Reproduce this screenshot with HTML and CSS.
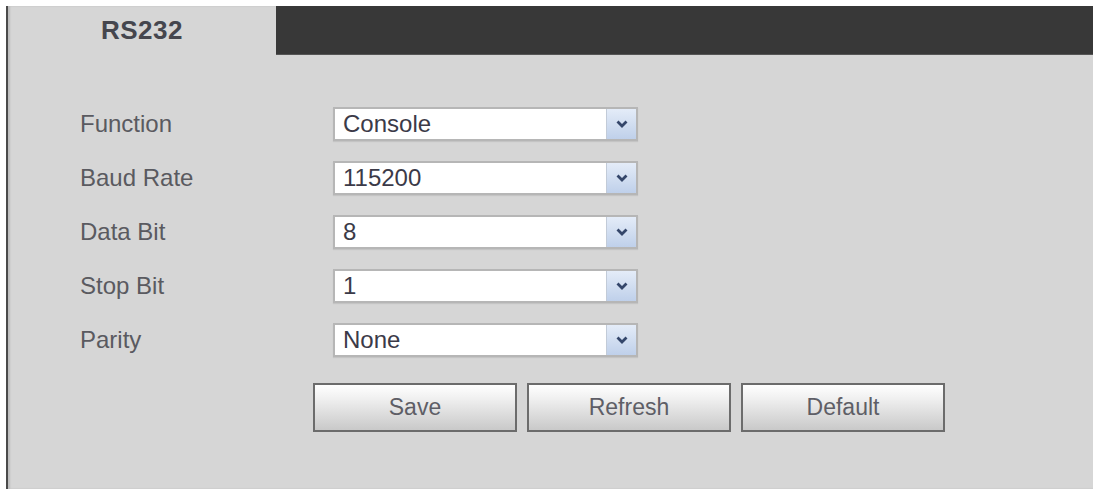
FILE: index.html
```html
<!DOCTYPE html>
<html lang="en">
<head>
  <meta charset="UTF-8">
  <title>RS232</title>
  <link rel="stylesheet" href="styles.css">
</head>
<body>
  <div class="panel">
    <div class="tabs">
      <div class="tab-active">RS232</div>
      <div class="tab-bar"></div>
    </div>
    <div class="form">
      <div class="row">
        <span class="label">Function</span>
        <div class="select">
          <span class="select-value">Console</span>
          <span class="select-arrow"><svg width="14" height="10" viewBox="0 0 14 10"><polyline points="2.5,2.5 7,7 11.5,2.5" fill="none" stroke="#34466a" stroke-width="2.8"/></svg></span>
        </div>
      </div>
      <div class="row">
        <span class="label">Baud Rate</span>
        <div class="select">
          <span class="select-value">115200</span>
          <span class="select-arrow"><svg width="14" height="10" viewBox="0 0 14 10"><polyline points="2.5,2.5 7,7 11.5,2.5" fill="none" stroke="#34466a" stroke-width="2.8"/></svg></span>
        </div>
      </div>
      <div class="row">
        <span class="label">Data Bit</span>
        <div class="select">
          <span class="select-value">8</span>
          <span class="select-arrow"><svg width="14" height="10" viewBox="0 0 14 10"><polyline points="2.5,2.5 7,7 11.5,2.5" fill="none" stroke="#34466a" stroke-width="2.8"/></svg></span>
        </div>
      </div>
      <div class="row">
        <span class="label">Stop Bit</span>
        <div class="select">
          <span class="select-value">1</span>
          <span class="select-arrow"><svg width="14" height="10" viewBox="0 0 14 10"><polyline points="2.5,2.5 7,7 11.5,2.5" fill="none" stroke="#34466a" stroke-width="2.8"/></svg></span>
        </div>
      </div>
      <div class="row">
        <span class="label">Parity</span>
        <div class="select">
          <span class="select-value">None</span>
          <span class="select-arrow"><svg width="14" height="10" viewBox="0 0 14 10"><polyline points="2.5,2.5 7,7 11.5,2.5" fill="none" stroke="#34466a" stroke-width="2.8"/></svg></span>
        </div>
      </div>
      <div class="buttons">
        <button class="btn">Save</button>
        <button class="btn">Refresh</button>
        <button class="btn">Default</button>
      </div>
    </div>
  </div>
</body>
</html>
```

FILE: styles.css
```css
html, body {
  height: 100%;
}
body {
  background: #fff;
  margin: 0;
  padding-top: 6px;
  box-sizing: border-box;
  font-family: "Liberation Sans", Arial, sans-serif;
  overflow: hidden;
}
.panel {
  margin-left: 6px;
  margin-right: 2px;
  height: 100%;
  background: #d6d6d6;
  border-left: 2px solid #4a4a4a;
  box-shadow: inset 2px 0 2px #bdbdbd;
}
.tabs {
  display: flex;
  height: 49px;
}
.tab-active {
  width: 268px;
  display: flex;
  align-items: center;
  justify-content: center;
  font-size: 26px;
  font-weight: bold;
  color: #45464e;
  letter-spacing: 0.5px;
}
.tab-bar {
  flex: 1;
  background: #383838;
  border-bottom: 1px solid #555;
}
.form {
  padding: 52px 0 0 72px;
}
.row {
  display: flex;
  align-items: center;
  height: 34px;
  margin-bottom: 20px;
}
.label {
  width: 253px;
  font-size: 24px;
  color: #5a5a60;
}
.select {
  display: flex;
  width: 305px;
  height: 34px;
  box-sizing: border-box;
  background: #fff;
  border: 2px solid #b6b6b6;
  box-shadow: 0 1px 1px #c4c4c4;
}
.select-value {
  flex: 1;
  padding-left: 8px;
  font-size: 24px;
  line-height: 30px;
  color: #3b3a48;
}
.select-arrow {
  width: 29px;
  display: flex;
  align-items: center;
  justify-content: center;
  background: linear-gradient(#e4ecf8, #bfd0ea);
  border-left: 1px solid #c2cbd8;
}
.buttons {
  display: flex;
  gap: 10px;
  margin: 26px 0 0 233px;
}
.btn {
  width: 204px;
  height: 49px;
  border: 2px solid #6c6c6c;
  background: linear-gradient(#ffffff 0%, #f0f0f0 30%, #c9c9c9 100%);
  font-family: "Liberation Sans", Arial, sans-serif;
  font-size: 23px;
  color: #5e5e66;
  padding: 0;
}
```
